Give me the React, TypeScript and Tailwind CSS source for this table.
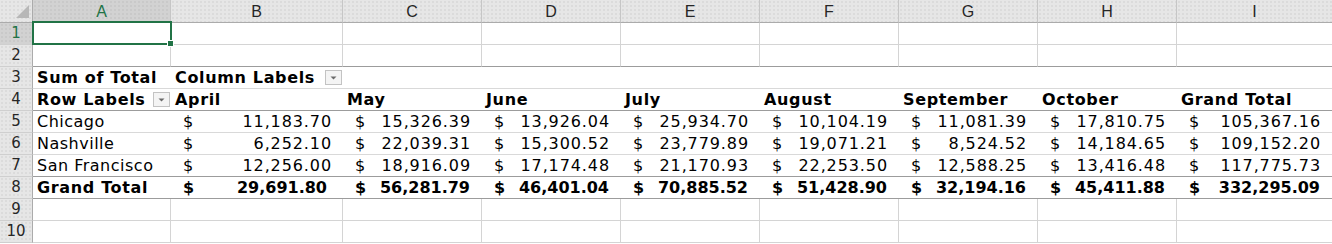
import React from 'react';

const COLS = ['A', 'B', 'C', 'D', 'E', 'F', 'G', 'H', 'I'];
const MONTHS = ['April', 'May', 'June', 'July', 'August', 'September', 'October', 'Grand Total'];

const CITY_ROWS = [
    { label: 'Chicago', values: ['11,183.70', '15,326.39', '13,926.04', '25,934.70', '10,104.19', '11,081.39', '17,810.75', '105,367.16'] },
    { label: 'Nashville', values: ['6,252.10', '22,039.31', '15,300.52', '23,779.89', '19,071.21', '8,524.52', '14,184.65', '109,152.20'] },
    { label: 'San Francisco', values: ['12,256.00', '18,916.09', '17,174.48', '21,170.93', '22,253.50', '12,588.25', '13,416.48', '117,775.73'] },
];
const TOTALS = ['29,691.80', '56,281.79', '46,401.04', '70,885.52', '51,428.90', '32,194.16', '45,411.88', '332,295.09'];

// header strip: flat gray with the faint dot texture
const HEAD = 'bg-[#e6e6e6] bg-[radial-gradient(circle,#d5d5d5_0.6px,transparent_0.9px)] bg-[length:4px_4px]';
const HEAD_SEL = 'bg-[#d2d2d2] bg-[radial-gradient(circle,#c4c4c4_0.6px,transparent_0.9px)] bg-[length:4px_4px]';

const GRID = 'border-b-[#d4d4d4]';
const DARK = 'border-b-[#9c9c9c]';
const LIGHT = 'border-b-[#d9d9d9]';

// Verdana runs wider than DejaVu, so stretch a little
const BOLD_TEXT = 'font-bold tracking-[0.65px]';
const TEXT = 'tracking-[0.5px]';

const FilterButton: React.FC = () => (
    <span className="ml-auto mr-px flex h-[15px] w-[17px] shrink-0 items-center justify-center border border-[#c3c3c3] bg-[#f4f4f4]">
        <svg width="7" height="4" viewBox="0 0 7 4">
            <path d="M0.5 0.5h6L3.5 3.5z" fill="#6a6a6a" />
        </svg>
    </span>
);

const RowHead: React.FC<{ n: number; selected?: boolean }> = ({ n, selected }) => (
    <div
        className={`flex h-[22px] items-center justify-center border-r border-b border-r-[#ababab] border-b-[#cfcfcf] text-[15px] ${
            selected ? `${HEAD_SEL} text-[#217346]` : `${HEAD} text-[#262626]`
        }`}
    >
        {n}
    </div>
);

const Money: React.FC<{ value: string; bold?: boolean; border: string; extraPad?: boolean }> = ({
    value,
    bold,
    border,
    extraPad,
}) => (
    <div
        className={`flex h-[22px] items-center justify-between border-b pl-[12px] ${border} ${
            bold ? `font-bold ${extraPad ? 'pr-4' : 'pr-3'}` : 'pr-[11px] tracking-[0.9px]'
        }`}
    >
        <span>$</span>
        <span>{value}</span>
    </div>
);

// an empty row outside the pivot table
const EmptyRow: React.FC<{ n: number; selected?: boolean; bottom?: string }> = ({ n, selected, bottom = GRID }) => (
    <>
        <RowHead n={n} selected={selected} />
        {COLS.map((c, i) => (
            <div
                key={c}
                className={`relative h-[22px] border-b ${bottom} ${i < COLS.length - 1 ? 'border-r border-r-[#d4d4d4]' : ''}`}
            >
                {selected && i === 0 && (
                    <>
                        <div className="absolute -top-[2px] -right-[2px] -bottom-px -left-px z-10 border-2 border-[#217346]" />
                        <div className="absolute -right-[4px] -bottom-[3px] z-20 h-[7px] w-[7px] border border-white bg-[#217346]" />
                    </>
                )}
            </div>
        ))}
    </>
);

export default function App() {
    return (
        <div className="h-[244px] w-[1332px] overflow-hidden bg-white font-['DejaVu_Sans',Verdana,sans-serif] text-[16px] leading-[21px] text-black">
            <div className="grid grid-cols-[33px_138px_172px_139px_139px_139px_139px_139px_139px_1fr]">
                {/* Column headers */}
                <div className={`relative h-[23px] border-r border-b border-r-[#ababab] border-b-[#ababab] ${HEAD}`}>
                    <svg className="absolute right-[3px] bottom-[4px]" width="13" height="13" viewBox="0 0 13 13">
                        <path d="M13 0V13H0z" fill="#b7b7b7" />
                    </svg>
                </div>
                {COLS.map((c, i) => (
                    <div
                        key={c}
                        className={`flex h-[23px] items-center justify-center border-b border-b-[#ababab] font-['Liberation_Sans',Arial,sans-serif] text-[16px] ${
                            i < COLS.length - 1 ? 'border-r border-r-[#c6c6c6]' : ''
                        } ${i === 0 ? `${HEAD_SEL} text-[#217346]` : `${HEAD} text-[#262626]`}`}
                    >
                        {c}
                    </div>
                ))}

                <EmptyRow n={1} selected />
                <EmptyRow n={2} bottom={DARK} />

                {/* Row 3: pivot title row */}
                <RowHead n={3} />
                <div className={`flex h-[22px] items-center border-b pl-1 ${BOLD_TEXT} ${LIGHT}`}>Sum of Total</div>
                <div className={`flex h-[22px] items-center border-b pl-1 ${BOLD_TEXT} ${LIGHT}`}>
                    <span>Column Labels</span>
                    <FilterButton />
                </div>
                {COLS.slice(2).map((c) => (
                    <div key={c} className={`h-[22px] border-b ${LIGHT}`} />
                ))}

                {/* Row 4: labels */}
                <RowHead n={4} />
                <div className={`flex h-[22px] items-center border-b pl-1 ${BOLD_TEXT} ${DARK}`}>
                    <span>Row Labels</span>
                    <FilterButton />
                </div>
                {MONTHS.map((m) => (
                    <div key={m} className={`flex h-[22px] items-center border-b pl-1 ${BOLD_TEXT} ${DARK}`}>
                        {m}
                    </div>
                ))}

                {/* Rows 5-7: cities */}
                {CITY_ROWS.map((row, r) => {
                    const border = r === CITY_ROWS.length - 1 ? DARK : LIGHT;
                    return (
                        <React.Fragment key={row.label}>
                            <RowHead n={5 + r} />
                            <div className={`flex h-[22px] items-center border-b pl-1 ${TEXT} ${border}`}>{row.label}</div>
                            {row.values.map((v, i) => (
                                <Money key={i} value={v} border={border} />
                            ))}
                        </React.Fragment>
                    );
                })}

                {/* Row 8: grand total */}
                <RowHead n={8} />
                <div className={`flex h-[22px] items-center border-b pl-1 ${BOLD_TEXT} ${DARK}`}>Grand Total</div>
                {TOTALS.map((v, i) => (
                    <Money key={i} value={v} bold border={DARK} extraPad={i === 0} />
                ))}

                <EmptyRow n={9} />
                <EmptyRow n={10} />
            </div>
        </div>
    );
}
